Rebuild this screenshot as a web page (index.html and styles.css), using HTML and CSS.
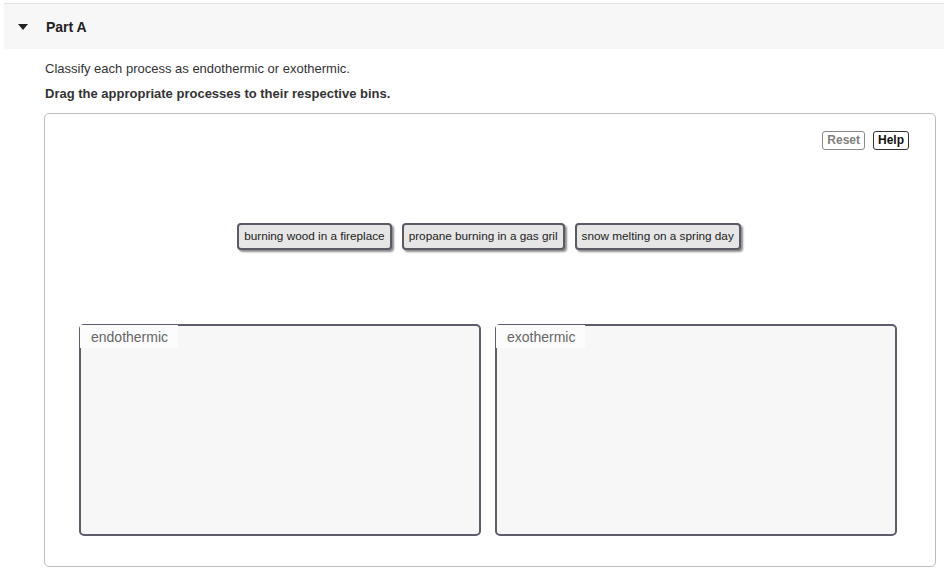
FILE: index.html
```html
<!DOCTYPE html>
<html>
<head>
<meta charset="utf-8">
<link rel="stylesheet" href="styles.css">
</head>
<body>
<div class="page">
  <div class="part-header">
    <span class="caret"></span>
    <span class="part-title">Part A</span>
  </div>
  <div class="part-body">
    <p class="prompt">Classify each process as endothermic or exothermic.</p>
    <p class="instr">Drag the appropriate processes to their respective bins.</p>
    <div class="board">
      <div class="tools">
        <button class="btn btn-reset">Reset</button>
        <button class="btn btn-help">Help</button>
      </div>
      <div class="chips">
        <div class="chip">burning wood in a fireplace</div>
        <div class="chip">propane burning in a gas gril</div>
        <div class="chip">snow melting on a spring day</div>
      </div>
      <div class="bins">
        <div class="bin"><span class="bin-label">endothermic</span></div>
        <div class="bin"><span class="bin-label">exothermic</span></div>
      </div>
    </div>
  </div>
</div>
</body>
</html>
```
FILE: styles.css
```css
html, body {
  margin: 0;
  padding: 0;
  background: #fff;
  font-family: "Liberation Sans", Arial, sans-serif;
  color: #333;
}
.page {
  padding: 3px 0 0 4px;
}
.part-header {
  border-top: 1px solid #e2e2e2;
  background: #f7f7f7;
  height: 45px;
  display: flex;
  align-items: center;
}
.caret {
  width: 0;
  height: 0;
  border-left: 5px solid transparent;
  border-right: 5px solid transparent;
  border-top: 6px solid #222;
  margin-left: 14px;
  margin-top: 0;
}
.part-title {
  margin-left: 18px;
  font-weight: bold;
  font-size: 14px;
  color: #222;
  margin-top: 0;
}
.part-body {
  padding-left: 40px;
}
.prompt {
  margin: 12px 0 0 1px;
  font-size: 13px;
  line-height: 15px;
  color: #333;
}
.instr {
  margin: 10px 0 0 1px;
  font-size: 13px;
  line-height: 15px;
  font-weight: bold;
  color: #333;
}
.board {
  margin-top: 12px;
  width: 890px;
  height: 452px;
  border: 1px solid #bdbdbd;
  border-radius: 5px;
  box-sizing: content-box;
}
.tools {
  display: flex;
  justify-content: flex-end;
  gap: 8px;
  padding: 17px 26px 0 0;
}
.btn {
  font-family: "Liberation Sans", Arial, sans-serif;
  font-weight: bold;
  font-size: 12px;
  height: 19px;
  padding: 0 4px;
  background: #fff;
  border-radius: 3px;
  line-height: 15px;
}
.btn-reset {
  border: 1px solid #8a8a8a;
  color: #808080;
}
.btn-help {
  border: 1px solid #333;
  color: #111;
}
.chips {
  display: flex;
  justify-content: center;
  gap: 10px;
  margin-top: 73px;
  padding-right: 2px;
}
.chip {
  height: 27px;
  box-sizing: border-box;
  border: 2px solid #5a5a66;
  border-radius: 4px;
  background: #e6e6e6;
  box-shadow: 2px 2px 2px rgba(0,0,0,0.45);
  font-size: 11.75px;
  color: #222;
  padding: 0 5px 2px;
  display: flex;
  align-items: center;
}
.bins {
  display: flex;
  gap: 14px;
  margin-top: 74px;
  padding-left: 34px;
}
.bin {
  width: 402px;
  height: 212px;
  box-sizing: border-box;
  border: 2px solid #5d5d6b;
  border-radius: 5px;
  background: #f7f7f7;
  display: flex;
  align-items: flex-start;
}
.bin-label {
  background: #fcfcfc;
  color: #666;
  font-size: 14px;
  line-height: 22px;
  padding: 1px 10px 0 11px;
  margin: -1px 0 0 -1px;
}
```
